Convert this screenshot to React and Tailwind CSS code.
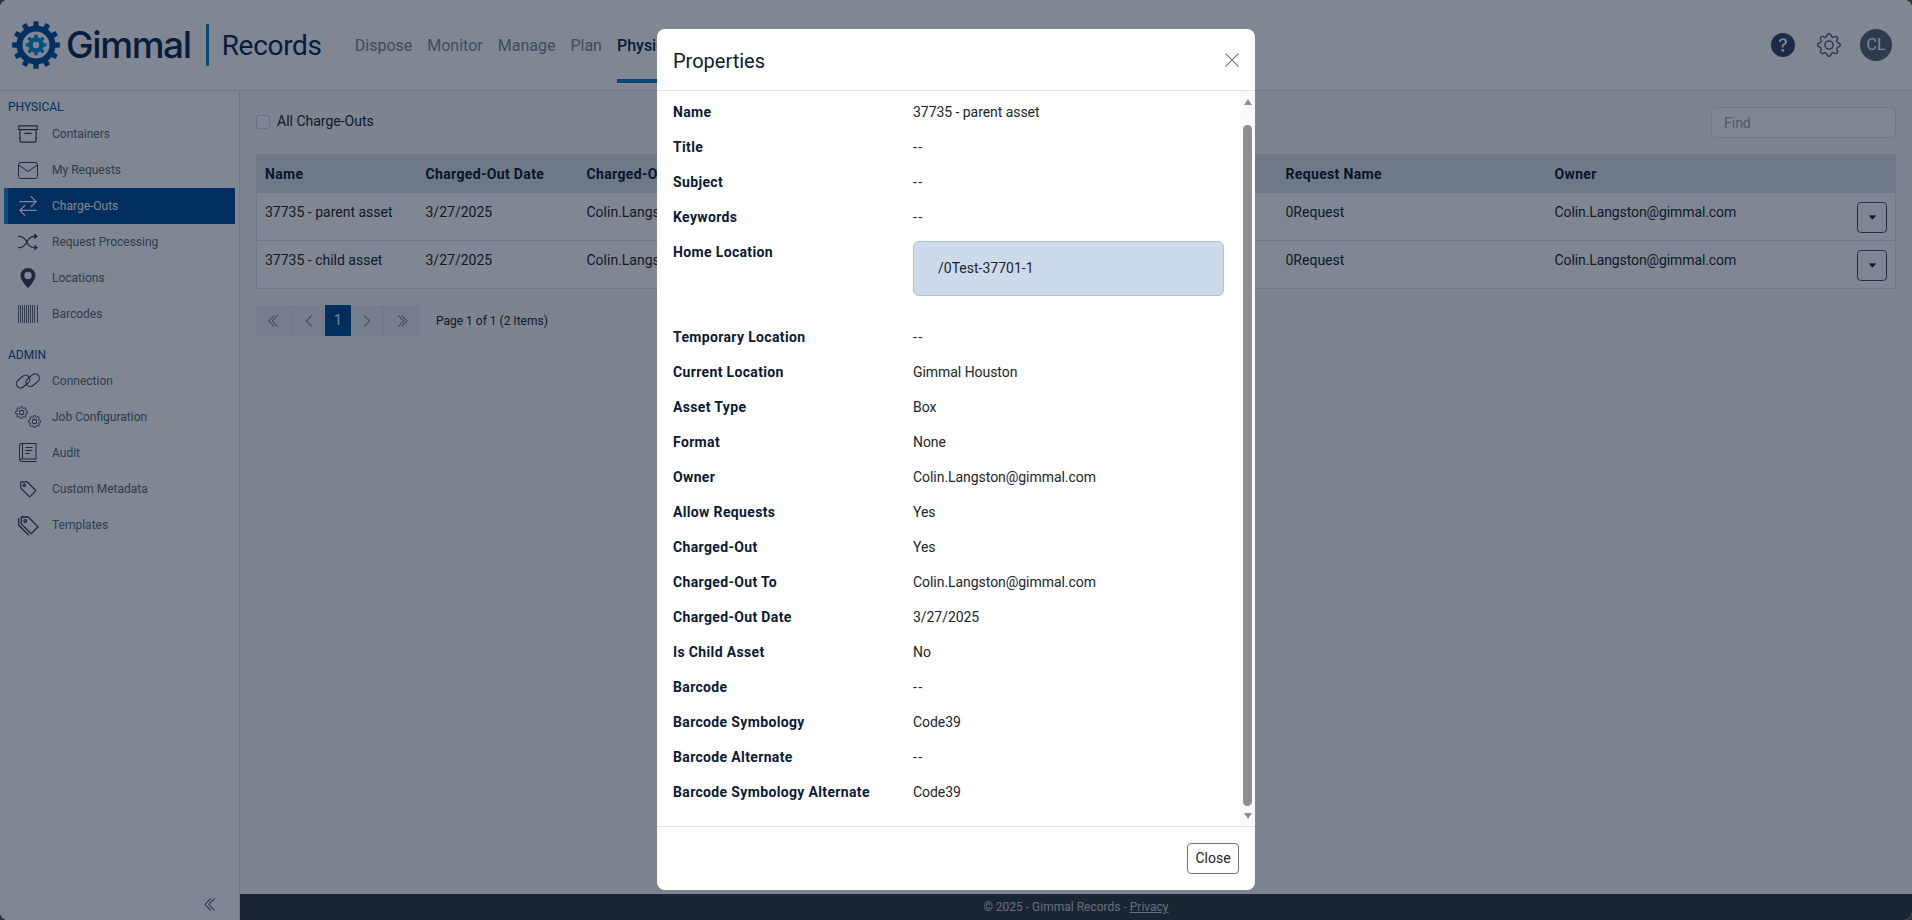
import {
  BsArchive,
  BsArrowLeftRight,
  BsCaretDownFill,
  BsChevronDoubleLeft,
  BsChevronDoubleRight,
  BsChevronLeft,
  BsChevronRight,
  BsGear,
  BsGeoAltFill,
  BsQuestionCircleFill,
  BsShuffle,
  BsTag,
  BsTags,
  BsXLg,
} from "react-icons/bs";

const FONT = "font-['Roboto','Liberation_Sans',sans-serif]";

const gearPath = (cx, cy, outer, inner, teeth) => {
  const step = (Math.PI * 2) / teeth;
  const pts = [];
  for (let i = 0; i < teeth; i++) {
    const a = i * step - Math.PI / 2;
    [
      [-0.5, inner],
      [-0.27, inner],
      [-0.2, outer],
      [0.2, outer],
      [0.27, inner],
    ].forEach(([t, r]) => {
      const x = cx + r * Math.cos(a + t * step);
      const y = cy + r * Math.sin(a + t * step);
      pts.push(`${x.toFixed(2)} ${y.toFixed(2)}`);
    });
  }
  return `M${pts.join("L")}Z`;
};

const circlePath = (cx, cy, r) =>
  `M${cx - r} ${cy}a${r} ${r} 0 1 0 ${r * 2} 0a${r} ${r} 0 1 0 ${-r * 2} 0Z`;

const GearLogo = () => (
  <svg width="48" height="48" viewBox="0 0 48 48" className="shrink-0">
    <path
      fillRule="evenodd"
      fill="#00509f"
      d={gearPath(24, 24, 24, 19.5, 12) + circlePath(24, 24, 13.5)}
    />
    <path
      fillRule="evenodd"
      fill="#0f8fdc"
      d={gearPath(24, 24, 10.5, 7.8, 8) + circlePath(24, 24, 3.2)}
    />
  </svg>
);

const BarcodeIcon = () => (
  <svg width="20" height="18" viewBox="0 0 20 18" stroke="currentColor">
    {[0.5, 2.5, 4.5, 6.5, 8.5, 10.5, 12.5, 14.5, 16.5, 19.5].map((x) => (
      <line key={x} x1={x} x2={x} y1="0" y2="18" strokeWidth="0.8" />
    ))}
  </svg>
);

const MailIcon = () => (
  <svg width="20" height="17" viewBox="0 0 20 17" fill="none" stroke="currentColor" strokeWidth="1">
    <rect x=".5" y=".5" width="19" height="16" rx="2" />
    <path d="M.8 3l9.200 6.500L19.200 3" />
  </svg>
);

const LinkIcon = () => (
  <svg width="26" height="20" viewBox="0 0 26 20" fill="none" stroke="currentColor" strokeWidth="1.1">
    <rect x="0.8" y="6.5" width="15" height="8.5" rx="4.25" transform="rotate(-40 8 11)" />
    <rect x="10" y="5" width="15" height="8.5" rx="4.25" transform="rotate(-40 17.5 9)" />
  </svg>
);

const GearsIcon = () => (
  <span className="relative block w-[26px] h-[22px]">
    <BsGear size={13} className="absolute left-0 top-0" />
    <BsGear size={13} className="absolute right-0 bottom-0" />
  </span>
);

const BookIcon = () => (
  <svg width="18" height="20" viewBox="0 0 18 20" fill="none" stroke="currentColor" strokeWidth="1">
    <path d="M3.5 .5h13.5v15.5h-13.5zM3.5 .5h-1.5a1.5 1.5 0 0 0-1.500 1.500v14.500a2 2 0 0 0 2 2h15" />
    <path d="M1 17a1.500 1.500 0 0 1 2-1" />
    <path d="M6.500 4.500h7M6.500 7.500h7M6.500 10.500h4" />
  </svg>
);

const physicalItems = [
  { label: "Containers", icon: <BsArchive size={20} /> },
  { label: "My Requests", icon: <MailIcon /> },
  { label: "Charge-Outs", icon: <BsArrowLeftRight size={20} className="-scale-x-100" />, active: true },
  { label: "Request Processing", icon: <BsShuffle size={20} /> },
  { label: "Locations", icon: <BsGeoAltFill size={20} /> },
  { label: "Barcodes", icon: <BarcodeIcon /> },
];

const adminItems = [
  { label: "Connection", icon: <LinkIcon /> },
  { label: "Job Configuration", icon: <GearsIcon /> },
  { label: "Audit", icon: <BookIcon /> },
  { label: "Custom Metadata", icon: <BsTag size={19} /> },
  { label: "Templates", icon: <BsTags size={21} /> },
];

const properties = [
  ["Name", "37735 - parent asset"],
  ["Title", "--"],
  ["Subject", "--"],
  ["Keywords", "--"],
  ["Home Location", null],
  ["Temporary Location", "--"],
  ["Current Location", "Gimmal Houston"],
  ["Asset Type", "Box"],
  ["Format", "None"],
  ["Owner", "Colin.Langston@gimmal.com"],
  ["Allow Requests", "Yes"],
  ["Charged-Out", "Yes"],
  ["Charged-Out To", "Colin.Langston@gimmal.com"],
  ["Charged-Out Date", "3/27/2025"],
  ["Is Child Asset", "No"],
  ["Barcode", "--"],
  ["Barcode Symbology", "Code39"],
  ["Barcode Alternate", "--"],
  ["Barcode Symbology Alternate", "Code39"],
];

const chargeOuts = ["37735 - parent asset", "37735 - child asset"];

const NavItem = ({ label, icon, active }) => (
  <div
    className={`flex items-center h-9 ml-1 mr-1 text-[12px] ${
      active
        ? "bg-[#004b99] text-white border-l-4 border-[#0f8fdc]"
        : "pl-1 text-[#5b6675]"
    }`}
  >
    <span
      className={`flex justify-center w-10 ${active ? "text-white" : "text-[#33404f]"}`}
    >
      {icon}
    </span>
    <span className="ml-1">{label}</span>
  </div>
);

const PagerButton = ({ children, className }) => (
  <div className={`flex items-center justify-center h-full text-[#5b6675] ${className}`}>
    {children}
  </div>
);

const App = () => {
  return (
    <div className={`h-screen w-full bg-[#333] ${FONT}`}>
      <div className="relative flex flex-col h-full rounded-lg overflow-hidden bg-white text-[#212529]">
        <header className="flex items-center h-[91px] shrink-0 pl-3 pr-[20px] border-b border-[#dde3ea]">
          <GearLogo />
          <span className="ml-[6px] font-['Inter',sans-serif] text-[37px] font-medium tracking-[-1.4px] text-[#0a2a50]">
            Gimmal
          </span>
          <span className="ml-[15px] w-[3px] h-[42px] bg-[#0f7dc2]" />
          <span className="ml-[13px] pt-[2px] text-[28px] text-[#0a2a50] tracking-[-0.3px]">Records</span>
          <nav className="flex items-center h-full ml-[33px] pt-[2px] gap-[15px] text-[16px] text-[#7b8794]">
            <span>Dispose</span>
            <span>Monitor</span>
            <span>Manage</span>
            <span>Plan</span>
            <span className="relative flex items-center h-full font-medium text-[#0a2a50]">
              Physical
              <span className="absolute left-0 right-0 bottom-[7px] h-1 bg-[#0f7dc2]" />
            </span>
          </nav>
          <div className="flex items-center ml-auto">
            <BsQuestionCircleFill size={24} className="text-[#33496a]" />
            <BsGear size={24} className="ml-[22px] text-[#5b6675]" />
            <span className="flex items-center justify-center ml-[19px] w-8 h-8 rounded-full bg-[#5b6675] text-[16px] text-white">
              CL
            </span>
          </div>
        </header>

        <div className="flex flex-1 min-h-0">
          <aside className="flex flex-col w-[240px] shrink-0 border-r border-[#dde3ea]">
            <div className="pl-2 pt-[10px] pb-[3px] text-[12px] leading-[12px] text-[#004b99]">PHYSICAL</div>
            {physicalItems.map((item) => (
              <NavItem key={item.label} {...item} />
            ))}
            <div className="pl-2 pt-[17px] pb-[2px] text-[12px] leading-[12px] text-[#004b99]">ADMIN</div>
            {adminItems.map((item) => (
              <NavItem key={item.label} {...item} />
            ))}
            <div className="flex justify-end mt-auto pr-[21px] pb-[8px] text-[#33496a]">
              <BsChevronDoubleLeft size={15} />
            </div>
          </aside>

          <div className="flex flex-col flex-1 min-w-0">
            <main className="flex-1 min-h-0 bg-[#f8f9fa] pl-4 pr-4 pt-4">
              <div className="flex items-start justify-between h-[47px]">
                <label className="flex items-center gap-[7px] h-[29px] text-[14px]">
                  <span className="w-[14px] h-[14px] rounded-[3px] border border-[#ced4da] bg-white" />
                  All Charge-Outs
                </label>
                <input
                  placeholder="Find"
                  className="w-[185px] h-[31px] px-3 text-[14px] rounded border border-[#dee2e6] bg-white placeholder:text-[#9aa3ad]"
                />
              </div>
              <table className="w-[1640px] table-fixed border border-[#dee2e6] text-[14px] text-left bg-white">
                <colgroup>
                  <col className="w-[161px]" />
                  <col className="w-[161px]" />
                  <col className="w-[699px]" />
                  <col className="w-[269px]" />
                  <col />
                </colgroup>
                <thead>
                  <tr className="h-[38px] bg-[#dde1e6] font-bold text-[#0a1a33] tracking-[0.35px]">
                    <th className="pl-2 pt-[2px]">Name</th>
                    <th className="pl-2 pt-[2px]">Charged-Out Date</th>
                    <th className="pl-2 pt-[2px]">Charged-Out To</th>
                    <th className="pl-2 pt-[2px]">Request Name</th>
                    <th className="pl-2 pt-[2px]">Owner</th>
                  </tr>
                </thead>
                <tbody>
                  {chargeOuts.map((name) => (
                    <tr key={name} className="h-12 border-t border-[#dee2e6] align-top">
                      <td className="pl-2 pt-[9px]">{name}</td>
                      <td className="pl-2 pt-[9px]">3/27/2025</td>
                      <td className="pl-2 pt-[9px]">Colin.Langston@gimmal.com</td>
                      <td className="pl-2 pt-[9px]">0Request</td>
                      <td className="pl-2 pt-[9px]">
                        <div className="flex justify-between pr-2">
                          <span className="tracking-[-0.1px]">Colin.Langston@gimmal.com</span>
                          <span className="flex items-center justify-center w-[30px] h-[31px] rounded border border-[#495057]">
                            <BsCaretDownFill size={9} />
                          </span>
                        </div>
                      </td>
                    </tr>
                  ))}
                </tbody>
              </table>
              <div className="flex items-center mt-4">
                <div className="flex items-center w-[164px] h-[31px] rounded bg-[#e9ecef] overflow-hidden">
                  <PagerButton className="w-9 border-r border-[#dee2e6]"><BsChevronDoubleLeft size={14} /></PagerButton>
                  <PagerButton className="w-[33px]"><BsChevronLeft size={14} /></PagerButton>
                  <div className="flex items-center justify-center w-[26px] h-full bg-[#004b99] text-[14px] text-white">1</div>
                  <PagerButton className="w-[33px] border-r border-[#dee2e6]"><BsChevronRight size={14} /></PagerButton>
                  <PagerButton className="w-9"><BsChevronDoubleRight size={14} /></PagerButton>
                </div>
                <span className="ml-4 text-[12px]">Page 1 of 1 (2 Items)</span>
              </div>
            </main>
            <footer className="flex items-center justify-center h-[26px] shrink-0 bg-[#333b43] text-[12px] text-[#c8ccd2]">
              © 2025 - Gimmal Records -&nbsp;<span className="underline">Privacy</span>
            </footer>
          </div>
        </div>

        <div className="absolute inset-0 bg-[#010f25]/50">
          <div className="flex flex-col w-[598px] h-[861px] mt-[29px] mx-auto rounded-lg bg-white">
            <div className="flex items-center justify-between h-[62px] shrink-0 pl-4 pr-[14px] pt-[2px] border-b border-[#dee2e6]">
              <span className="text-[20px] text-[#0a1a33]">Properties</span>
              <BsXLg size={18} className="text-[#6c757d] -mt-[2px]" />
            </div>
            <div className="flex flex-1 min-h-0">
              <div className="flex-1 min-w-0 pl-4 pr-4 pt-[4px]">
                {properties.map(([label, value]) => (
                  <div
                    key={label}
                    className={`flex text-[14px] leading-[35px] ${value ? "h-[35px]" : "h-[85px]"}`}
                  >
                    <span className="w-[240px] shrink-0 font-bold tracking-[0.35px] text-[#0a1a33]">{label}</span>
                    {value ? (
                      <span className={value === "--" ? "tracking-[1.5px]" : "tracking-[-0.05px]"}>{value}</span>
                    ) : (
                      <div className="flex items-center w-[311px] h-[55px] mt-[6px] pl-6 rounded-md border border-[#a9c1dc] bg-[#ccdaeb]">
                        /0Test-37701-1
                      </div>
                    )}
                  </div>
                ))}
              </div>
              <div className="flex flex-col items-center w-[15px] shrink-0 bg-[#fafafa] pt-[8px] pb-[7px]">
                <span className="w-0 h-0 border-x-[4.5px] border-x-transparent border-b-[6px] border-b-[#8f8f8f]" />
                <span className="w-[9px] flex-1 mt-[20px] mb-[7px] rounded-full bg-[#8f8f8f]" />
                <span className="w-0 h-0 border-x-[4.5px] border-x-transparent border-t-[6px] border-t-[#8f8f8f]" />
              </div>
            </div>
            <div className="flex items-center justify-end h-[64px] shrink-0 pr-4 border-t border-[#dee2e6]">
              <button className="w-[52px] h-[31px] rounded border border-[#6c757d] text-[14px] text-[#212529]">
                Close
              </button>
            </div>
          </div>
        </div>
      </div>
    </div>
  );
};

export default App;
